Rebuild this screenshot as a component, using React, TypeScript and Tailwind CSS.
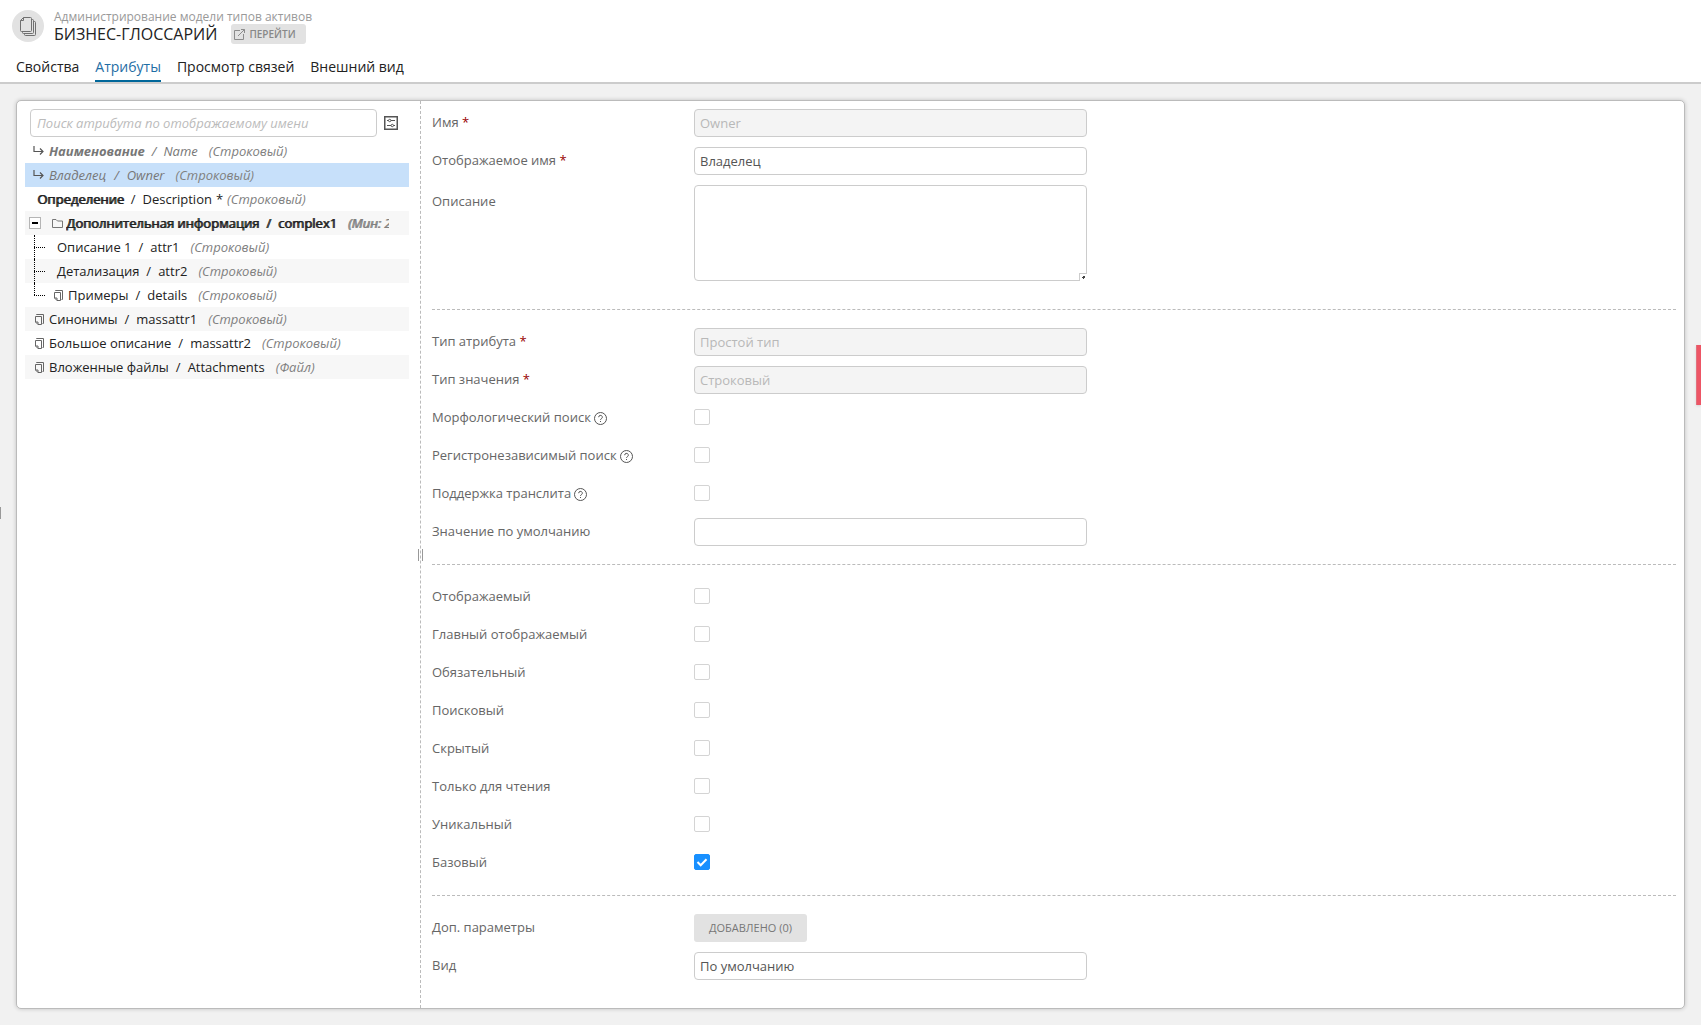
import React from "react";

type Kind = "inherit" | "plain" | "folder" | "multi";
type Attr = {
  kind: Kind;
  name: string;
  code: string;
  type: string;
  bold?: boolean;
  boldAll?: boolean;
  required?: boolean;
  selected?: boolean;
  child?: boolean;
  last?: boolean;
};

const attrs: Attr[] = [
  { kind: "inherit", name: "Наименование", code: "Name", type: "(Строковый)", bold: true },
  { kind: "inherit", name: "Владелец", code: "Owner", type: "(Строковый)", selected: true },
  { kind: "plain", name: "Определение", code: "Description", type: "(Строковый)", bold: true, required: true },
  { kind: "folder", name: "Дополнительная информация", code: "complex1", type: "(Мин: 2", boldAll: true },
  { kind: "plain", name: "Описание 1", code: "attr1", type: "(Строковый)", child: true },
  { kind: "plain", name: "Детализация", code: "attr2", type: "(Строковый)", child: true },
  { kind: "multi", name: "Примеры", code: "details", type: "(Строковый)", child: true, last: true },
  { kind: "multi", name: "Синонимы", code: "massattr1", type: "(Строковый)" },
  { kind: "multi", name: "Большое описание", code: "massattr2", type: "(Строковый)" },
  { kind: "multi", name: "Вложенные файлы", code: "Attachments", type: "(Файл)" },
];

const StackIcon = () => (
  <svg width="17" height="19" viewBox="0 0 17 19" fill="none" stroke="#707070" strokeWidth="1">
    <path d="M3.5.5h7a1 1 0 0 1 1 1v12a1 1 0 0 1-1 1h-9a1 1 0 0 1-1-1v-10z" />
    <path d="M3.5.5v3h-3" />
    <path d="M11.500 2.500h1a1 1 0 0 1 1 1v12a1 1 0 0 1-1 1h-9a1 1 0 0 1-1-1v-1" />
    <path d="M13.500 4.500h1a1 1 0 0 1 1 1v12a1 1 0 0 1-1 1h-9a1 1 0 0 1-1-1v-1" />
  </svg>
);

const ExternalIcon = () => (
  <svg width="11" height="11" viewBox="0 0 11 11" fill="none" stroke="#8c8c8c">
    <path d="M6 1.500H.5v9h9V5M4 7l6.500-6.500M7 .5h3.500v3.500" />
  </svg>
);

const SettingsIcon = () => (
  <svg width="14" height="14" viewBox="0 0 14 14" fill="none" stroke="#555">
    <rect x=".75" y=".75" width="12.500" height="12.500" strokeWidth="1.500" />
    <path d="M3 4.500h1.500M7 4.500h4M3 9.500h4M9.500 9.500h1.500" />
    <circle cx="5.700" cy="4.500" r="1.200" />
    <circle cx="8.300" cy="9.500" r="1.200" />
  </svg>
);

const InheritIcon = () => (
  <svg width="11" height="10" viewBox="0 0 11 10" fill="none" stroke="#555" strokeWidth="1.200">
    <path d="M1 0v5.500h9M7 2.500l3 3-3 3" />
  </svg>
);

const FolderIcon = () => (
  <svg width="11" height="9" viewBox="0 0 11 9" fill="none" stroke="#777" strokeWidth="1">
    <path d="M.5 8.500v-8h3.500l1.500 1.500h5v6.500z" />
  </svg>
);

const MultiIcon = () => (
  <svg width="9" height="11" viewBox="0 0 9 11" fill="none" stroke="#666" strokeWidth="1">
    <path d="M1.500 1V.5h7v9H7.500" />
    <path d="M.5 2.500h6v8h-3.500l-2.500-2.500zM3 10.500v-2.500h-2.500" />
  </svg>
);

const HelpIcon = () => (
  <svg width="13" height="13" viewBox="0 0 13 13" fill="none" stroke="#555">
    <circle cx="6.500" cy="6.500" r="6" />
    <path d="M4.700 5.200a1.800 1.800 0 1 1 2.700 1.500c-.6.400-.9.700-.9 1.300M6.500 9v1" />
  </svg>
);

function TreeRow({ a, odd }: { a: Attr; odd: boolean }) {
  const bg = a.selected ? "bg-[#c7e0fa]" : odd ? "bg-[#f7f7f7]" : "";
  const inherited = a.kind === "inherit";
  return (
    <li className={"flex h-6 items-center whitespace-nowrap " + bg}>
      {a.child && (
        <span className="relative ml-[9px] w-[11px] self-stretch">
          <span className={"absolute left-0 top-0 border-l border-dotted border-black " + (a.last ? "h-3" : "h-6")} />
          <span className="absolute left-0 top-3 w-[11px] border-t border-dotted border-black" />
        </span>
      )}
      {inherited && (
        <span className="ml-2 mr-[5px]">
          <InheritIcon />
        </span>
      )}
      {a.kind === "folder" && (
        <>
          <button
            type="button"
            aria-label="Свернуть"
            className="ml-1 mr-[11px] flex size-3 items-center justify-center border border-[#b5b5b5] bg-white"
          >
            <span className="h-[2px] w-[6px] bg-black" />
          </button>
          <span className="mr-[3px]">
            <FolderIcon />
          </span>
        </>
      )}
      {a.kind === "multi" && (
        <span className={a.child ? "ml-[9px] mr-[5px]" : "ml-[10px] mr-[5px]"}>
          <MultiIcon />
        </span>
      )}
      {a.kind === "plain" && <span className="ml-3" />}
      <span
        className={
          "pt-[2px] " +
          (inherited ? "italic text-[#777] " : "text-[#222] ") +
          (a.boldAll ? "w-[323px] overflow-hidden [text-shadow:1px_0_currentColor]" : "")
        }
      >
        <span className={a.bold ? (inherited ? "font-bold" : "[text-shadow:1px_0_currentColor]") : ""}>{a.name}</span>
        <span className={inherited && !a.bold ? "mx-2" : "mx-[7px]"}>/</span>
        <span>{a.code}</span>
        {a.required ? <span className="mx-1">*</span> : <span className="mr-[11px]" />}
        <span className="italic text-[#808080]">{a.type}</span>
      </span>
    </li>
  );
}

function Field({
  label,
  id,
  required,
  help,
  tall,
  children,
}: {
  label: string;
  id: string;
  required?: boolean;
  help?: boolean;
  tall?: boolean;
  children: React.ReactNode;
}) {
  return (
    <div className="flex items-start">
      <div
        className={"flex w-[262px] shrink-0 items-center text-[13px] text-[#666] " + (tall ? "h-[34px]" : "h-7")}
      >
        <label htmlFor={id}>
          {label}
          {required && <span className="text-[#990000]"> *</span>}
        </label>
        {help && (
          <button type="button" aria-label="Справка" className="ml-[3px]">
            <HelpIcon />
          </button>
        )}
      </div>
      {children}
    </div>
  );
}

const box = "w-full max-w-[393px] rounded-[4px] border border-[#ccc] px-[5px] text-[13px] text-[#555] ";

function TextField({ label, id, value, required, disabled }: { label: string; id: string; value: string; required?: boolean; disabled?: boolean }) {
  return (
    <Field label={label} id={id} required={required}>
      <input
        id={id}
        type="text"
        defaultValue={value}
        disabled={disabled}
        className={box + "h-7 disabled:bg-[#f4f4f4] disabled:text-[#b8b8b8]"}
      />
    </Field>
  );
}

function CheckField({ label, id, help, checked }: { label: string; id: string; help?: boolean; checked?: boolean }) {
  return (
    <Field label={label} id={id} help={help}>
      <span className="relative flex h-[26px] items-center">
        <input
          id={id}
          type="checkbox"
          defaultChecked={checked}
          className="peer size-4 appearance-none rounded-[2px] border border-[#d4d4d4] bg-white checked:border-[#1890ff] checked:bg-[#1890ff]"
        />
        <svg
          className="pointer-events-none absolute left-0 hidden peer-checked:block"
          width="16"
          height="16"
          viewBox="0 0 16 16"
          fill="none"
          stroke="#fff"
          strokeWidth="2"
        >
          <path d="M3.500 8l3.200 3.300L12.500 5.300" />
        </svg>
      </span>
    </Field>
  );
}

const section = "flex flex-col gap-[10px] border-b border-dashed border-[#bbb] ";

export default function App() {
  return (
    <div className="flex min-h-screen flex-col bg-[#f1f1f1] font-['Open_Sans',sans-serif]">
      <header className="border-b-2 border-[#ccc] bg-white">
        <div className="flex px-3 pt-[10px]">
          <span className="flex size-8 items-center justify-center rounded-full bg-[#e2e2e2]">
            <StackIcon />
          </span>
          <div className="ml-[10px]">
            <p className="text-[12px] leading-[14px] text-[#999]">Администрирование модели типов активов</p>
            <div className="flex items-center gap-[14px]">
              <h1 className="text-[16px] leading-5 text-[#222]">БИЗНЕС-ГЛОССАРИЙ</h1>
              <a
                href="#open"
                className="flex h-5 items-center gap-1 rounded-[3px] bg-[#e2e2e2] pl-[3px] pr-[10px] text-[10px] font-semibold text-[#888]"
              >
                <ExternalIcon />
                ПЕРЕЙТИ
              </a>
            </div>
          </div>
        </div>
        <nav className="flex gap-4 px-4 pt-3 text-[14px] leading-[22px] text-[#222]">
          <a href="#props" className="border-b-2 border-transparent pb-0.5">Свойства</a>
          <a href="#attrs" className="border-b-2 border-[#00679a] pb-0.5 text-[#1f6ea5]" aria-current="page">Атрибуты</a>
          <a href="#links" className="border-b-2 border-transparent pb-0.5">Просмотр связей</a>
          <a href="#view" className="border-b-2 border-transparent pb-0.5">Внешний вид</a>
        </nav>
      </header>

      <main className="mx-4 my-4 flex grow rounded-[5px] border border-[#bbb] bg-white shadow-[0_0_4px_rgba(0,0,0,0.2)]">
        <aside className="w-[404px] shrink-0 border-r border-dashed border-[#bbb] pl-2 pr-[11px] pt-2">
          <div className="flex items-center pl-[5px]">
            <input
              type="text"
              aria-label="Поиск атрибута"
              placeholder="Поиск атрибута по отображаемому имени"
              className="h-7 w-[347px] rounded-[4px] border border-[#ccc] px-[6px] text-[13px] italic placeholder:text-[#bbb]"
            />
            <button type="button" aria-label="Настройки" className="ml-[7px]">
              <SettingsIcon />
            </button>
          </div>
          <ul className="mt-[2px] text-[13px]">
            {attrs.map((a, i) => (
              <TreeRow key={a.code} a={a} odd={i % 2 === 1} />
            ))}
          </ul>
        </aside>

        <div className="relative h-3 w-0 self-center">
          <span className="absolute -left-[3px] h-3 w-[5px] border-x border-[#999]" />
        </div>

        <form className="grow pl-[11px] pr-2" onSubmit={(e) => e.preventDefault()}>
          <div className={section + "pb-7 pt-2"}>
            <TextField label="Имя" id="name" value="Owner" required disabled />
            <TextField label="Отображаемое имя" id="display" value="Владелец" required />
            <Field label="Описание" id="desc" tall>
              <div className="relative flex w-full max-w-[393px]">
                <textarea id="desc" className={box + "h-24 resize-none"} />
                <span className="pointer-events-none absolute bottom-0 right-0 flex size-[8px] items-center justify-center border-l border-t border-[#ccc] bg-white">
                  <svg width="3" height="3" viewBox="0 0 3 3" fill="#444">
                    <path d="M1 0h2v2h-1v1h-1v-1h-1v-1h1z" />
                  </svg>
                </span>
              </div>
            </Field>
          </div>
          <div className={section + "pb-[18px] pt-[18px]"}>
            <TextField label="Тип атрибута" id="atype" value="Простой тип" required disabled />
            <TextField label="Тип значения" id="vtype" value="Строковый" required disabled />
            <CheckField label="Морфологический поиск" id="morph" help />
            <CheckField label="Регистронезависимый поиск" id="case" help />
            <CheckField label="Поддержка транслита" id="translit" help />
            <TextField label="Значение по умолчанию" id="default" value="" />
          </div>
          <div className={section + "pb-[18px] pt-[18px]"}>
            <CheckField label="Отображаемый" id="c1" />
            <CheckField label="Главный отображаемый" id="c2" />
            <CheckField label="Обязательный" id="c3" />
            <CheckField label="Поисковый" id="c4" />
            <CheckField label="Скрытый" id="c5" />
            <CheckField label="Только для чтения" id="c6" />
            <CheckField label="Уникальный" id="c7" />
            <CheckField label="Базовый" id="c8" checked />
          </div>
          <div className="flex flex-col gap-[10px] pb-7 pt-[18px]">
            <Field label="Доп. параметры" id="extra">
              <button id="extra" type="button" className="h-7 rounded-[3px] bg-[#e2e2e2] px-[15px] text-[11px] text-[#777]">
                ДОБАВЛЕНО (0)
              </button>
            </Field>
            <Field label="Вид" id="kind">
              <select id="kind" className={box + "h-7 appearance-none bg-white pt-[2px]"}>
                <option>По умолчанию</option>
              </select>
            </Field>
          </div>
        </form>
      </main>

      <span className="fixed left-0 top-[507px] h-3 w-px bg-[#999]" />
      <span className="fixed right-0 top-[345px] h-[60px] w-[5px] border-l border-[#e0717d] bg-[#ed5565] shadow-sm" />
    </div>
  );
}
